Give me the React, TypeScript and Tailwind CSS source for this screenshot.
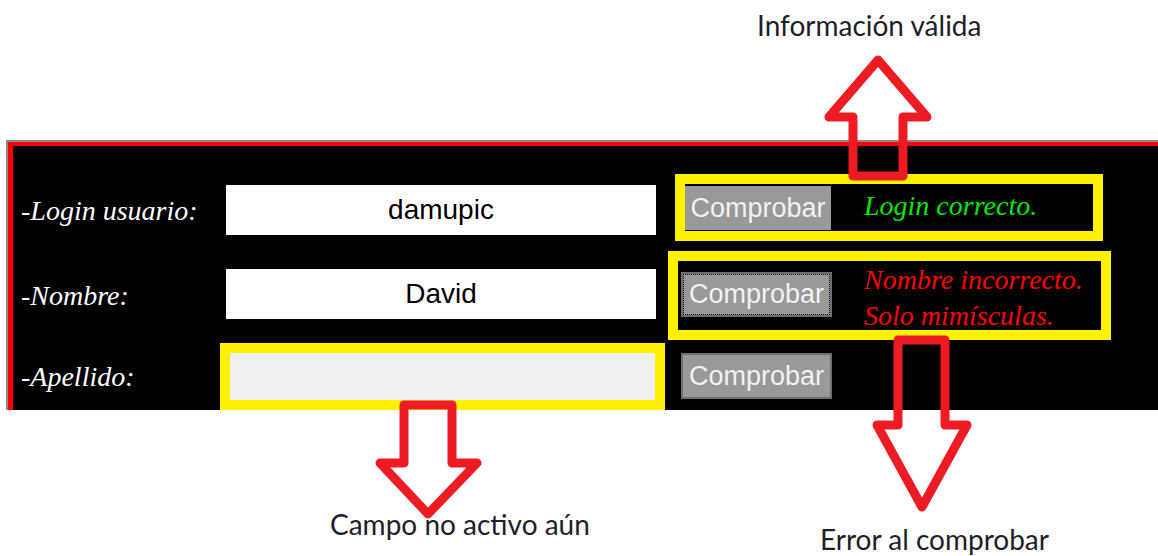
import React from "react";

const serif = { fontFamily: '"Liberation Serif", "Times New Roman", serif' };
const sans = { fontFamily: '"Liberation Sans", Arial, sans-serif' };
const note = { fontFamily: 'Lato, "Open Sans", sans-serif' };

function Btn({ focus, border }: { focus?: boolean; border?: boolean }) {
  return (
    <div
      className={`flex h-full w-full items-center justify-center bg-[#999999] text-[27px] leading-none text-[#f2f2f2] ${
        border ? "border-2 border-[#6f6f6f]" : ""
      }`}
      style={sans}
    >
      <div
        className={`flex h-full w-full items-center justify-center ${
          focus ? "border border-dotted border-black" : ""
        }`}
      >
        Comprobar
      </div>
    </div>
  );
}

export default function App() {
  return (
    <div className="relative h-[556px] w-[1158px] overflow-hidden bg-white">
      {/* top annotation */}
      <div className="h-[140px] pl-[757px] pt-[9px]">
        <div className="whitespace-nowrap text-[28px] leading-[32px] text-[#1e1e2a]" style={note}>
          Información válida
        </div>
      </div>

      {/* panel */}
      <div className="ml-[6px] h-[270px] border-l-2 border-t-2 border-[#8a8a8a]">
        <div className="h-full border-l-[5px] border-t-[4px] border-[#ff0000] bg-black pt-[28px]">
          {/* row 1 */}
          <div className="flex h-[67px]">
            <div className="flex w-[213px] items-center whitespace-nowrap pl-[8px] pt-[6px] text-[28px] italic text-white" style={serif}>
              -Login usuario:
            </div>
            <div className="mt-[11px] flex h-[50px] w-[430px] items-center justify-center bg-white text-[28px] text-black" style={sans}>
              damupic
            </div>
            <div className="ml-[19px] flex h-[67px] w-[428px] border-[10px] border-[#fff200]">
              <div className="mt-[2px] h-[44px] w-[146px]">
                <Btn />
              </div>
              <div className="ml-[33px] whitespace-nowrap pt-[4px] text-[28px] italic leading-[36px] text-[#00e600]" style={serif}>
                Login correcto.
              </div>
            </div>
          </div>

          {/* row 2 */}
          <div className="mt-[10px] flex h-[89px]">
            <div className="flex w-[213px] items-center pl-[8px] text-[28px] italic text-white" style={serif}>
              -Nombre:
            </div>
            <div className="mt-[18px] flex h-[50px] w-[430px] items-center justify-center bg-white text-[28px] text-black" style={sans}>
              David
            </div>
            <div className="ml-[12px] flex h-[89px] w-[443px] border-[10px] border-[#fff200]">
              <div className="ml-[3px] mt-[11px] h-[45px] w-[151px]">
                <Btn focus border />
              </div>
              <div className="ml-[32px] whitespace-nowrap pt-[1px] text-[28px] italic leading-[36px] text-[#ff0000]" style={serif}>
                <div>Nombre incorrecto.</div>
                <div>Solo mimísculas.</div>
              </div>
            </div>
          </div>

          {/* row 3 */}
          <div className="mt-[3px] flex h-[67px]">
            <div className="flex w-[207px] items-center pl-[8px] text-[28px] italic text-white" style={serif}>
              -Apellido:
            </div>
            <div className="h-[67px] w-[445px] border-[10px] border-[#fff200]">
              <div className="h-full w-full bg-[#efefef]" />
            </div>
            <div className="ml-[16px] mt-[10px] h-[46px] w-[151px]">
              <Btn border />
            </div>
          </div>
        </div>
      </div>

      {/* bottom annotations */}
      <div className="flex h-[146px] items-start pl-[330px]">
        <div className="w-[490px] shrink-0 pt-[98px]">
          <div className="whitespace-nowrap text-[28px] leading-[32px] text-[#1e1e2a]" style={note}>
            Campo no activo aún
          </div>
        </div>
        <div className="shrink-0 pt-[113px]">
          <div className="whitespace-nowrap text-[28px] leading-[32px] text-[#1e1e2a]" style={note}>
            Error al comprobar
          </div>
        </div>
      </div>

      {/* arrows overlay */}
      <svg
        className="pointer-events-none absolute left-0 top-0"
        width="1158"
        height="556"
        viewBox="0 0 1158 556"
      >
        <g fill="none" stroke="#ed1c24" strokeWidth="9" strokeLinejoin="round">
          <polygon points="878,60 927,117 903,117 903,176 853,176 853,117 829,117" />
          <polygon points="404,405 452,405 452,463 477,463 428,514 380,463 404,463" />
          <polygon points="898,340 945,340 945,425 967,425 922,507 877,425 898,425" />
        </g>
      </svg>
    </div>
  );
}
